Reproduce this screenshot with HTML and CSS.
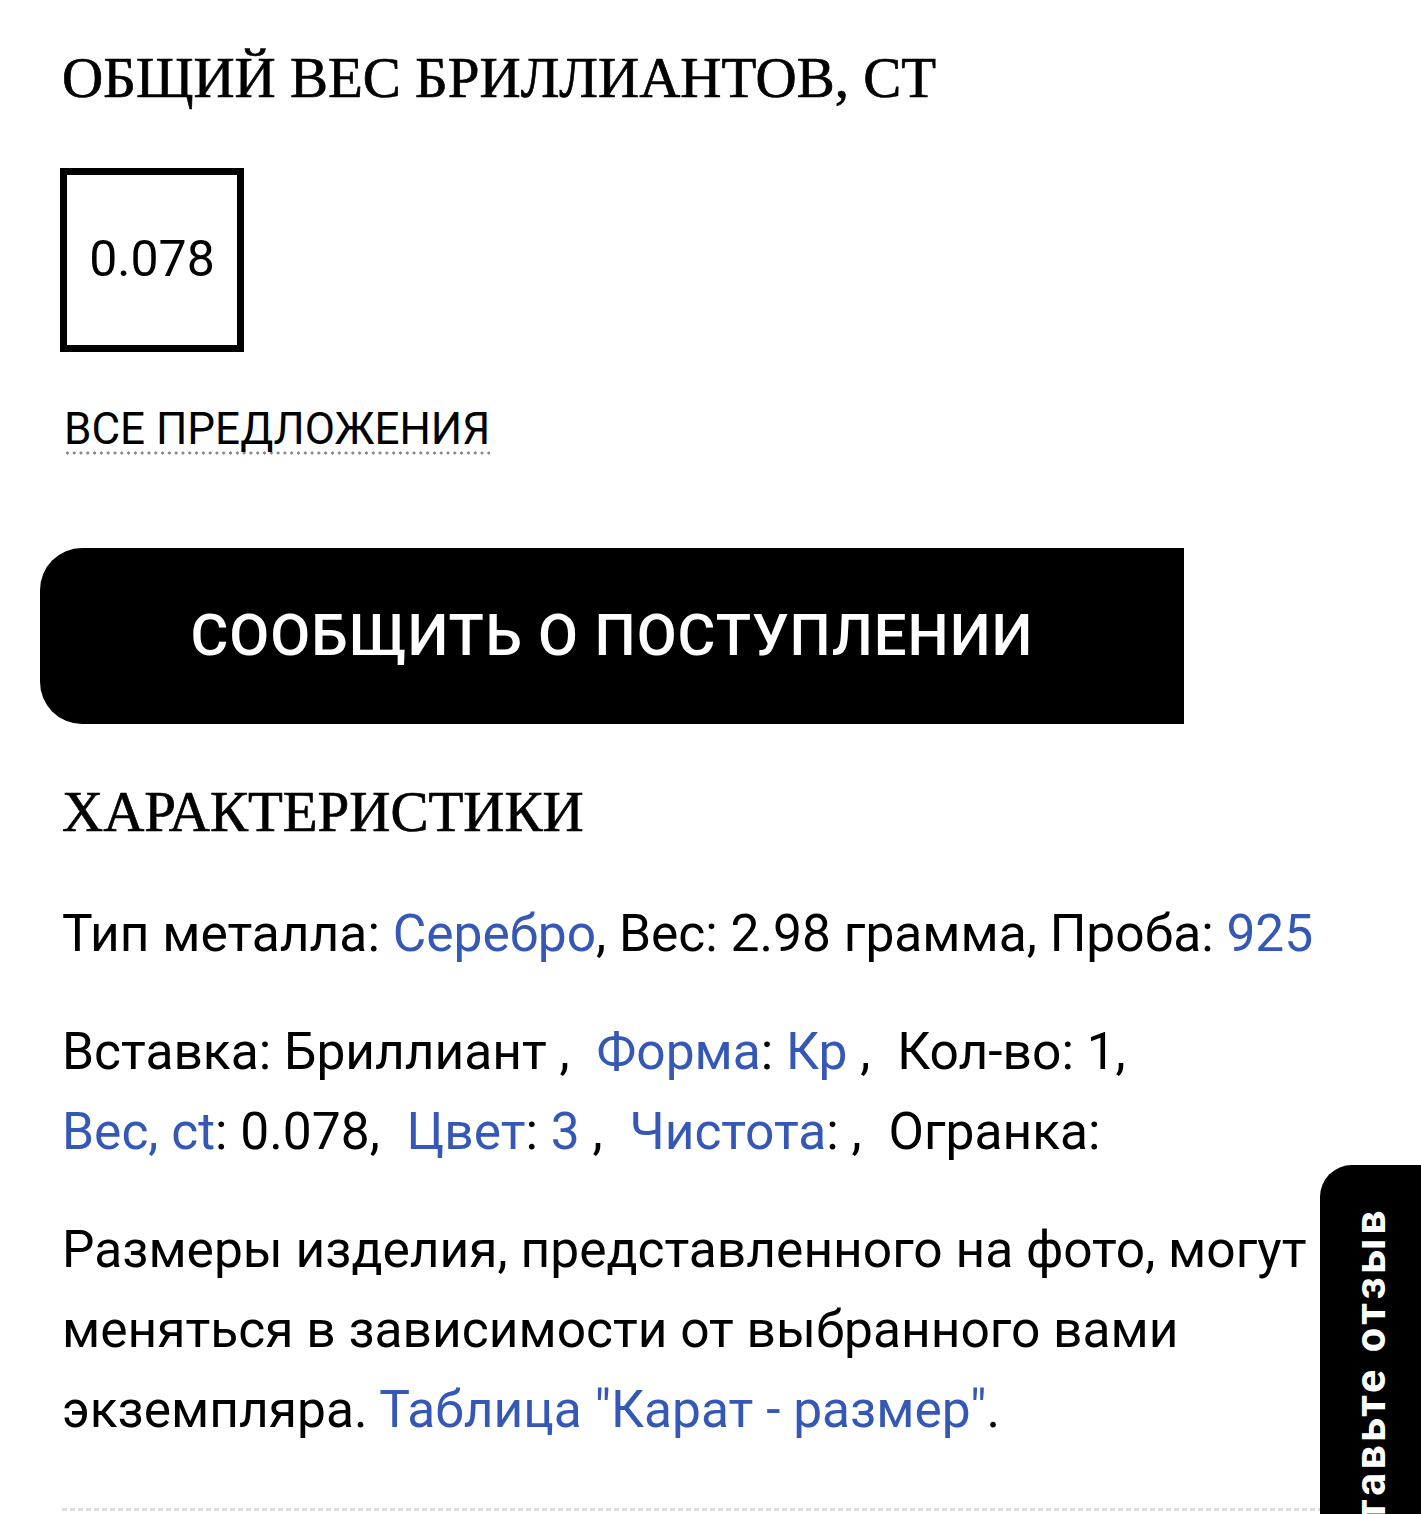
FILE: index.html
```html
<!DOCTYPE html>
<html lang="ru">
<head>
<meta charset="utf-8">
<title>Характеристики</title>
<link rel="stylesheet" href="styles.css">
</head>
<body>
<main class="page">
  <h2 class="title title-first">Общий вес бриллиантов, ct</h2>
  <div class="weight-box">0.078</div>
  <div class="offers-row"><a class="all-offers" href="#">ВСЕ ПРЕДЛОЖЕНИЯ</a></div>
  <button class="notify-btn" type="button">СООБЩИТЬ О ПОСТУПЛЕНИИ</button>
  <h2 class="title title-spec">Характеристики</h2>
  <p class="spec spec-first">Тип металла: <a class="lnk" href="#">Серебро</a>, Вес: 2.98 грамма, Проба: <a class="lnk" href="#">925</a></p>
  <p class="spec spec-insert"><span class="item">Вставка: Бриллиант ,</span> <span class="item"><a class="lnk" href="#">Форма</a>: <a class="lnk" href="#">Кр</a> ,</span> <span class="item">Кол-во: 1,</span> <span class="item"><a class="lnk" href="#">Вес, ct</a>: 0.078,</span> <span class="item"><a class="lnk" href="#">Цвет</a>: <a class="lnk" href="#">3</a> ,</span> <span class="item"><a class="lnk" href="#">Чистота</a>: ,</span> <span class="item">Огранка:</span></p>
  <p class="spec">Размеры изделия, представленного на фото, могут меняться в зависимости от выбранного вами экземпляра. <a class="lnk" href="#">Таблица "Карат - размер"</a>.</p>
  <div class="divider"></div>
</main>
<div class="review-tab"><span class="review-text">Оставьте отзыв</span></div>
</body>
</html>
```

FILE: styles.css
```css
html, body {
  margin: 0;
  padding: 0;
  background: #fff;
  color: #000;
  overflow: hidden;
}

.page {
  padding: 0 60px 0 60px;
  font-family: Roboto, "Noto Sans", sans-serif;
  height: 1514px;
  box-sizing: border-box;
}

.title {
  font-family: "Liberation Serif", "DejaVu Serif", serif;
  font-weight: 400;
  text-transform: uppercase;
  font-size: 57px;
  line-height: 60px;
  letter-spacing: 0;
  margin: 0;
  padding-left: 2px;
  -webkit-text-stroke: 0.7px #000;
}

.title-first {
  padding-top: 48px;
}

.weight-box {
  margin-top: 60px;
  width: 184px;
  height: 184px;
  box-sizing: border-box;
  border: 7px solid #000;
  display: flex;
  align-items: center;
  justify-content: center;
  font-size: 50px;
  padding-bottom: 2px;
}

.offers-row {
  display: flex;
  margin-top: 55px;
}

.all-offers {
  display: block;
  margin-left: 4px;
  font-size: 44px;
  line-height: 44px;
  color: #000;
  text-decoration: none;
  padding-bottom: 4px;
  background-image: radial-gradient(circle, #8a8a8a 1.4px, transparent 1.8px);
  background-size: 6.8px 4px;
  background-repeat: repeat-x;
  background-position: 0 100%;
}

.notify-btn {
  display: flex;
  align-items: center;
  justify-content: center;
  margin: 93px 0 0 -20px;
  width: 1144px;
  height: 176px;
  border: none;
  border-radius: 42px 0 0 42px;
  background: #000;
  color: #fff;
  font-family: Roboto, "Noto Sans", sans-serif;
  font-weight: 500;
  font-size: 58px;
  letter-spacing: 1px;
  padding: 0 0 2px 0;
}

.title-spec {
  margin-top: 58px;
}

.spec {
  font-size: 51.5px;
  line-height: 80px;
  margin: 38px 0 0 2px;
}

.spec-first {
  margin-top: 52px;
}

.item {
  white-space: nowrap;
  margin-right: 14px;
}

.item:last-child {
  margin-right: 0;
}

.lnk {
  color: #3558b6;
  text-decoration: none;
}

.divider {
  margin-top: 58px;
  margin-left: 2px;
  height: 3px;
  background-image: repeating-linear-gradient(90deg, #dcdcdc 0 5px, transparent 5px 8px);
}

.review-tab {
  position: fixed;
  top: 1165px;
  left: 1320px;
  width: 101px;
  height: 600px;
  background: #000;
  border-top-left-radius: 32px;
  display: flex;
  justify-content: center;
  align-items: flex-start;
  padding-top: 42px;
  box-sizing: border-box;
}

.review-text {
  writing-mode: vertical-rl;
  transform: rotate(180deg);
  color: #fff;
  font-family: Roboto, "Noto Sans", sans-serif;
  font-weight: 700;
  font-size: 43px;
  letter-spacing: 3.5px;
  line-height: 1;
}
```
